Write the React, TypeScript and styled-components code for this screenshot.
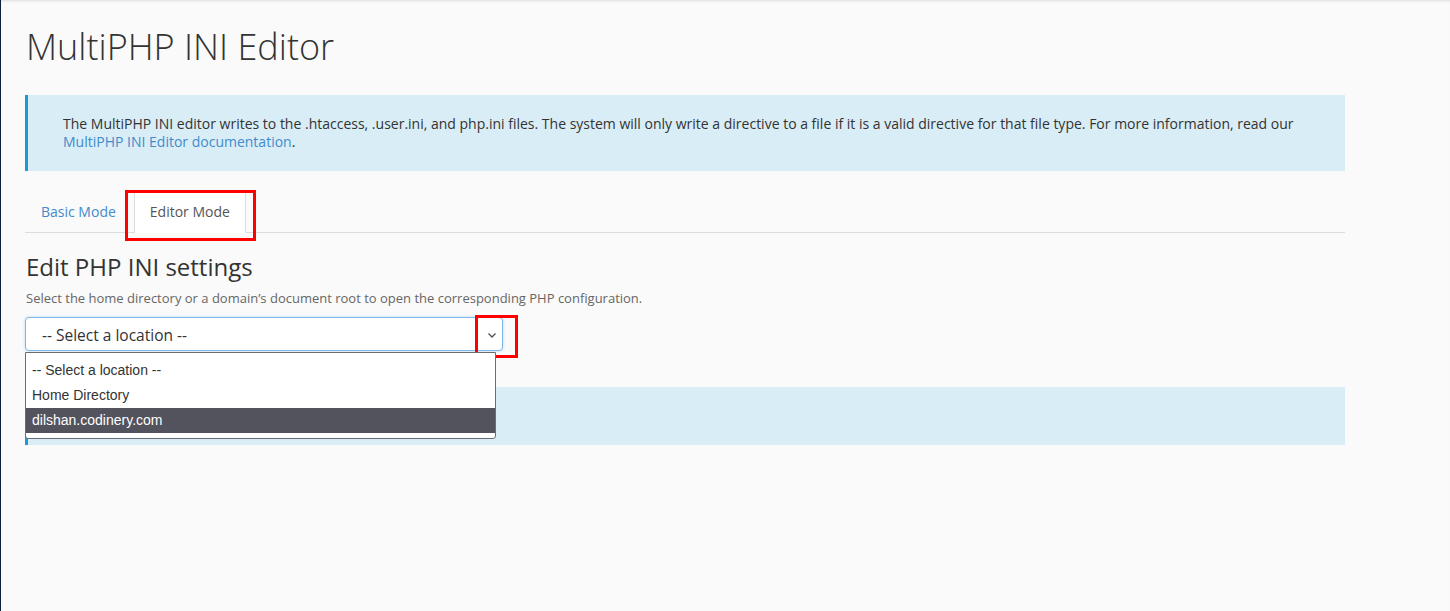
import React from "react";
import styled, { createGlobalStyle } from "styled-components";

const GlobalStyle = createGlobalStyle`
  html, body {
    margin: 0;
    padding: 0;
    background: #fafafa;
  }
  body {
    font-family: "Open Sans", "Liberation Sans", sans-serif;
    color: #333;
  }
`;

const Page = styled.div`
  min-height: 611px;
  box-sizing: border-box;
  border-left: 1px solid #0b1f44;
  box-shadow: inset 0 3px 3px -2px rgba(0, 0, 0, 0.12);
  padding: 25px 105px 0 24px;
`;

const Title = styled.h1`
  margin: 0;
  font-size: 36px;
  font-weight: 300;
  line-height: 44px;
  color: #333;
  padding-left: 1px;
`;

const InfoBox = styled.div<{ $height?: number; $gap?: number }>`
  margin-top: ${(p) => p.$gap ?? 26}px;
  background: #d9edf7;
  border-left: 3px solid #1b9ad6;
  padding: 20px 35px 20px 35px;
  font-size: 14px;
  line-height: 18px;
  color: #333;
  min-height: ${(p) => (p.$height ? `${p.$height}px` : "auto")};
  box-sizing: border-box;

  a {
    color: #428bca;
    text-decoration: none;
  }
`;

const Tabs = styled.ul`
  list-style: none;
  margin: 20px 0 0;
  padding: 0;
  display: flex;
  gap: 2px;
  border-bottom: 1px solid #ddd;
`;

const Tab = styled.li<{ $active?: boolean }>`
  position: relative;
  height: 42px;
  box-sizing: border-box;
  padding: 0 15px 3px;
  display: flex;
  align-items: center;
  font-size: 14px;
  color: ${(p) => (p.$active ? "#555" : "#428bca")};
  background: ${(p) => (p.$active ? "#fff" : "transparent")};
  border: 1px solid ${(p) => (p.$active ? "#ddd" : "transparent")};
  border-bottom: none;
  margin-bottom: -1px;
`;

const Highlight = styled.span<{ $top: number; $left: number; $right: number; $bottom: number }>`
  position: absolute;
  top: ${(p) => p.$top}px;
  left: ${(p) => p.$left}px;
  right: ${(p) => p.$right}px;
  bottom: ${(p) => p.$bottom}px;
  border: 3px solid #ff0000;
  pointer-events: none;
`;

const Heading = styled.h2`
  margin: 19px 0 0 1px;
  font-size: 24px;
  font-weight: 400;
  line-height: 30px;
  color: #333;
`;

const Help = styled.p`
  margin: 7px 0 0 1px;
  font-size: 13px;
  line-height: 18px;
  color: #666;
`;

const SelectWrap = styled.div`
  position: relative;
  width: 478px;
  margin-top: 10px;
`;

const SelectBox = styled.div`
  height: 34px;
  box-sizing: border-box;
  background: #fff;
  border: 1px solid #7fb8e8;
  border-radius: 4px;
  box-shadow: 0 0 3px rgba(102, 175, 233, 0.45);
  display: flex;
  align-items: center;
  justify-content: space-between;
  padding: 1px 4px 0 16px;
  font-size: 15.5px;
  color: #333;
`;

const Chevron = styled.svg`
  width: 12px;
  height: 12px;
`;

const Menu = styled.ul`
  position: absolute;
  top: 35px;
  left: 0;
  width: 471px;
  box-sizing: border-box;
  margin: 0;
  padding: 5px 0 5px;
  list-style: none;
  background: #fff;
  border: 1px solid #6b6b70;
  border-radius: 0 0 3px 3px;
  z-index: 2;
  font-family: "Liberation Sans", Arial, sans-serif;
  font-size: 14px;
`;

const Option = styled.li<{ $selected?: boolean }>`
  height: 25px;
  line-height: 25px;
  padding-left: 6px;
  color: ${(p) => (p.$selected ? "#fff" : "#333")};
  background: ${(p) => (p.$selected ? "#53535d" : "transparent")};
`;

const App = () => {
  return (
    <>
      <GlobalStyle />
      <Page>
        <Title>MultiPHP INI Editor</Title>
        <InfoBox>
          The MultiPHP INI editor writes to the .htaccess, .user.ini, and php.ini files. The system will only write a
          directive to a file if it is a valid directive for that file type. For more information, read our{" "}
          <a href="#">MultiPHP INI Editor documentation</a>.
        </InfoBox>
        <Tabs>
          <Tab>Basic Mode</Tab>
          <Tab $active>
            Editor Mode
            <Highlight $top={-2} $left={-10} $right={-11} $bottom={-8} />
          </Tab>
        </Tabs>
        <Heading>Edit PHP INI settings</Heading>
        <Help>Select the home directory or a domain’s document root to open the corresponding PHP configuration.</Help>
        <SelectWrap>
          <SelectBox>
            <span>-- Select a location --</span>
            <Chevron viewBox="0 0 12 12">
              <path d="M2.5 4.5 L6 8 L9.5 4.5" fill="none" stroke="#555" strokeWidth="1.4" />
            </Chevron>
          </SelectBox>
          <Highlight $top={-2} $left={450} $right={-15} $bottom={-7} />
          <Menu>
            <Option>-- Select a location --</Option>
            <Option>Home Directory</Option>
            <Option $selected>dilshan.codinery.com</Option>
          </Menu>
        </SelectWrap>
        <InfoBox $height={58} $gap={36} />
      </Page>
    </>
  );
};

export default App;
